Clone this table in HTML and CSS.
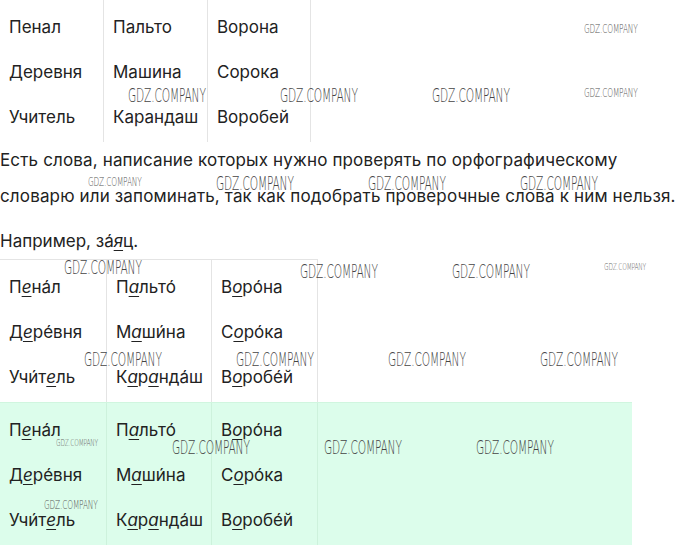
FILE: index.html
```html
<!DOCTYPE html>
<html lang="ru">
<head>
<meta charset="utf-8">
<link rel="stylesheet" href="styles.css">
</head>
<body>
<div class="page">
  <div class="table t1">
    <div class="col c1"><div class="cell">Пенал</div><div class="cell">Деревня</div><div class="cell">Учитель</div></div>
    <div class="col c2"><div class="cell">Пальто</div><div class="cell">Машина</div><div class="cell">Карандаш</div></div>
    <div class="col c3"><div class="cell">Ворона</div><div class="cell">Сорока</div><div class="cell">Воробей</div></div>
  </div>
  <p class="text">Есть слова, написание которых нужно проверять по орфографическому словарю или запоминать, так как подобрать проверочные слова к ним нельзя.</p>
  <p class="example">Например, за́<span class="u">я</span>ц.</p>
  <div class="table t2">
    <div class="col c1"><div class="cell">П<span class="u">е</span>на́л</div><div class="cell">Д<span class="u">е</span>ре́вня</div><div class="cell">Учи́т<span class="u">е</span>ль</div></div>
    <div class="col c2"><div class="cell">П<span class="u">а</span>льто́</div><div class="cell">М<span class="u">а</span>ши́на</div><div class="cell">К<span class="u">а</span>р<span class="u">а</span>нда́ш</div></div>
    <div class="col c3"><div class="cell">В<span class="u">о</span>ро́на</div><div class="cell">С<span class="u">о</span>ро́ка</div><div class="cell">В<span class="u">о</span>робе́й</div></div>
  </div>
  <div class="green">
    <div class="table t3">
      <div class="col c1"><div class="cell">П<span class="u">е</span>на́л</div><div class="cell">Д<span class="u">е</span>ре́вня</div><div class="cell">Учи́т<span class="u">е</span>ль</div></div>
      <div class="col c2"><div class="cell">П<span class="u">а</span>льто́</div><div class="cell">М<span class="u">а</span>ши́на</div><div class="cell">К<span class="u">а</span>р<span class="u">а</span>нда́ш</div></div>
      <div class="col c3"><div class="cell">В<span class="u">о</span>ро́на</div><div class="cell">С<span class="u">о</span>ро́ка</div><div class="cell">В<span class="u">о</span>робе́й</div></div>
    </div>
  </div>

  <span class="wm s" style="left:584px;top:23px">GDZ.COMPANY</span>
  <span class="wm" style="left:128px;top:86px">GDZ.COMPANY</span>
  <span class="wm" style="left:280px;top:86px">GDZ.COMPANY</span>
  <span class="wm" style="left:432px;top:86px">GDZ.COMPANY</span>
  <span class="wm s" style="left:584px;top:87px">GDZ.COMPANY</span>

  <span class="wm s" style="left:88px;top:176px">GDZ.COMPANY</span>
  <span class="wm" style="left:216px;top:174px">GDZ.COMPANY</span>
  <span class="wm" style="left:368px;top:174px">GDZ.COMPANY</span>
  <span class="wm" style="left:520px;top:174px">GDZ.COMPANY</span>

  <span class="wm" style="left:64px;top:258px">GDZ.COMPANY</span>
  <span class="wm" style="left:300px;top:262px">GDZ.COMPANY</span>
  <span class="wm" style="left:452px;top:262px">GDZ.COMPANY</span>
  <span class="wm xs" style="left:604px;top:262px">GDZ.COMPANY</span>

  <span class="wm" style="left:84px;top:350px">GDZ.COMPANY</span>
  <span class="wm" style="left:236px;top:350px">GDZ.COMPANY</span>
  <span class="wm" style="left:388px;top:350px">GDZ.COMPANY</span>
  <span class="wm" style="left:540px;top:350px">GDZ.COMPANY</span>

  <span class="wm xs" style="left:56px;top:438px">GDZ.COMPANY</span>
  <span class="wm" style="left:172px;top:438px">GDZ.COMPANY</span>
  <span class="wm" style="left:324px;top:438px">GDZ.COMPANY</span>
  <span class="wm" style="left:476px;top:438px">GDZ.COMPANY</span>

  <span class="wm s" style="left:44px;top:499px">GDZ.COMPANY</span>
</div>
</body>
</html>
```
FILE: styles.css
```css
* { box-sizing: border-box; }
html, body { margin: 0; padding: 0; background: #fff; }
body {
  font-family: Inter, Roboto, "Noto Sans", sans-serif;
  font-size: 17px;
  color: #222;
}
.page {
  position: relative;
  width: 680px;
  height: 545px;
  overflow: hidden;
}
.table { display: flex; }
.col {
  display: flex;
  flex-direction: column;
  padding: 4px 0 3px 9px;
  border-right: 1px solid #e4e4e4;
}
.cell {
  height: 45px;
  display: flex;
  align-items: center;
  white-space: nowrap;
}
.t1 .c1 { width: 104px; }
.t1 .c2 { width: 104px; }
.t1 .c3 { width: 103px; }
.t2, .t3 { width: 318px; }
.t2 .c1, .t3 .c1 { width: 107px; }
.t2 .c2, .t3 .c2 { width: 105px; }
.t2 .c3, .t3 .c3 { width: 106px; }
.t2 { border-top: 1px solid #e4e4e4; }
.text {
  margin: 0;
  line-height: 36px;
  letter-spacing: 0.15px;
}
.example {
  margin: 9px 0 0;
  line-height: 36px;
}
.u {
  font-style: italic;
  text-decoration: underline;
  text-underline-offset: 3px;
  text-decoration-thickness: 1px;
}
.green {
  width: 632px;
  height: 150px;
  background: #dcfdeb;
  border-top: 1px solid #d0f6df;
}
.t3 .col { border-right-color: #cdf2dc; }
.wm {
  position: absolute;
  font-family: "DejaVu Sans", sans-serif;
  font-weight: 200;
  font-size: 19px;
  line-height: 1;
  color: #444;
  white-space: nowrap;
  transform: scaleX(0.56);
  transform-origin: 0 0;
  letter-spacing: -0.3px;
}
.wm.s {
  font-size: 12px;
  transform: scaleX(0.62);
  color: #555;
}
.wm.xs {
  font-size: 9.5px;
  transform: scaleX(0.62);
  color: #666;
}
```
